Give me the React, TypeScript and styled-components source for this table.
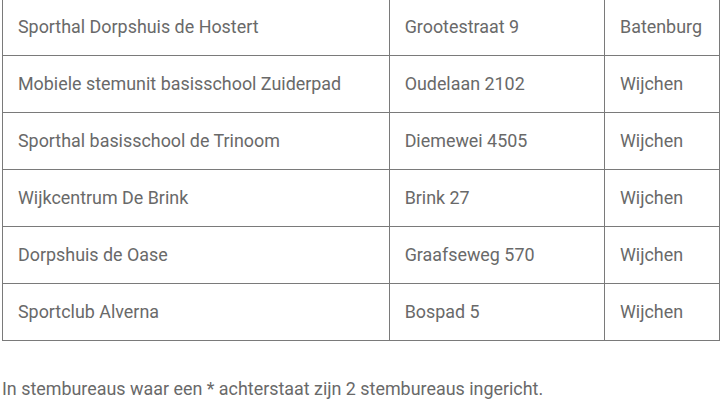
import React from 'react';
import styled, { createGlobalStyle } from 'styled-components';

const GlobalStyle = createGlobalStyle`
  html, body {
    margin: 0;
    padding: 0;
    background: #ffffff;
  }
  body {
    font-family: 'Roboto', 'Liberation Sans', sans-serif;
    color: #696969;
    overflow: hidden;
  }
`;

const Page = styled.div`
  padding: 0 3px 0 2px;
  margin-top: -2px;
`;

const Table = styled.table`
  width: 718px;
  border-collapse: collapse;
  border: 1px solid #7a7a7a;
  font-size: 17.9px;
  line-height: 26px;
`;

const Cell = styled.td<{ width: number }>`
  width: ${(props) => props.width}px;
  box-sizing: border-box;
  border: 1px solid #7a7a7a;
  padding: 15px;
  color: #696969;
  white-space: nowrap;
  vertical-align: middle;
`;

const Note = styled.p`
  margin: 35px 0 0 0;
  font-size: 17.9px;
  line-height: 26px;
  color: #696969;
`;

const rows = [
  ['Sporthal Dorpshuis de Hostert', 'Grootestraat 9', 'Batenburg'],
  ['Mobiele stemunit basisschool Zuiderpad', 'Oudelaan 2102', 'Wijchen'],
  ['Sporthal basisschool de Trinoom', 'Diemewei 4505', 'Wijchen'],
  ['Wijkcentrum De Brink', 'Brink 27', 'Wijchen'],
  ['Dorpshuis de Oase', 'Graafseweg 570', 'Wijchen'],
  ['Sportclub Alverna', 'Bospad 5', 'Wijchen'],
];

const widths = [387, 216, 115];

export default function App() {
  return (
    <Page>
      <GlobalStyle />
      <Table>
        <tbody>
          {rows.map((row) => (
            <tr key={row[0]}>
              {row.map((value, i) => (
                <Cell key={value} width={widths[i]}>{value}</Cell>
              ))}
            </tr>
          ))}
        </tbody>
      </Table>
      <Note>In stembureaus waar een * achterstaat zijn 2 stembureaus ingericht.</Note>
    </Page>
  );
}
